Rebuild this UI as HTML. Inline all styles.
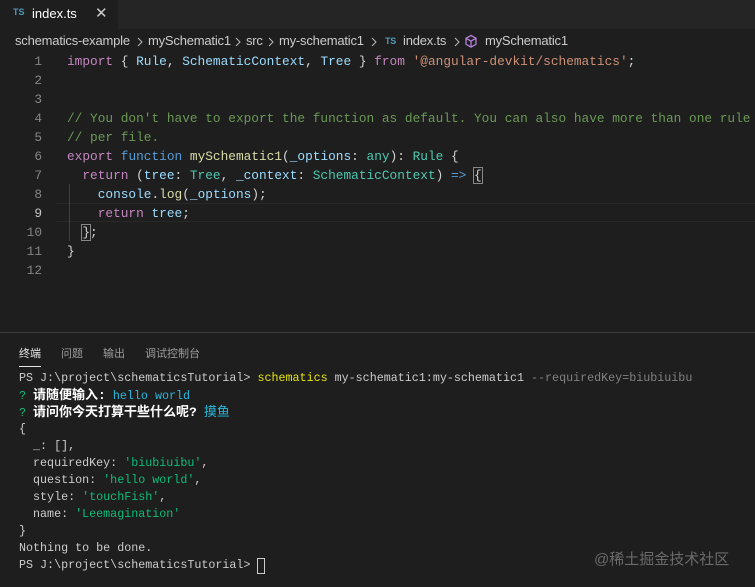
<!DOCTYPE html>
<html><head><meta charset="utf-8">
<style>
*{margin:0;padding:0;box-sizing:border-box}
body{width:755px;height:587px;background:#1e1e1e;overflow:hidden;position:relative;font-family:"Liberation Sans","Noto Sans CJK SC",sans-serif}
.tabbar{position:absolute;left:0;top:0;width:755px;height:29px;background:#252526}
.tab{position:absolute;left:0;top:0;width:118px;height:29px;background:#1e1e1e;color:#fff;font-size:13px}
.bc{position:absolute;top:33px;font-size:13px;color:#cccccc;white-space:pre;letter-spacing:-0.2px}
.sep{position:absolute;top:36px}
.m{font-family:"Liberation Mono","Noto Sans CJK SC",monospace;white-space:pre;position:absolute}
.code .m{font-size:12.8px;line-height:19px}
.ln{color:#858585;width:42px;text-align:right;left:0}
.kw{color:#c586c0}.bl{color:#569cd6}.ty{color:#4ec9b0}.va{color:#9cdcfe}.st{color:#ce9178}.cm{color:#6a9955}.fn{color:#dcdcaa}.tx{color:#d4d4d4}
.panel{position:absolute;left:0;top:332px;width:755px;height:255px;background:#1e1e1e;border-top:1px solid #3c3c3c}
.ptab{position:absolute;top:12px;font-size:11px;color:#9d9d9d}
.t{font-size:11.7px;line-height:17px;color:#cccccc;left:19px}
.g{color:#23d18b}.y{color:#e5e510}.c{color:#29b8db}.d{color:#808080}.w{color:#fff;font-weight:bold;font-size:13px}.gs{color:#0dbc79}
</style></head><body>
<div class="tabbar">
 <div class="tab"><span style="position:absolute;left:13px;top:7px;font-size:9px;color:#519aba;font-weight:bold">TS</span><span style="position:absolute;left:32px;top:6px">index.ts</span><span style="position:absolute;left:95px;top:4px;font-size:15px;color:#ccc">✕</span></div>
</div>
<div class="bc" style="left:15px">schematics-example</div>
<svg class="sep" style="left:136px" width="8" height="12"><path d="M2 2l4 4-4 4" stroke="#bbb" fill="none"/></svg>
<div class="bc" style="left:148px">mySchematic1</div>
<svg class="sep" style="left:234px" width="8" height="12"><path d="M2 2l4 4-4 4" stroke="#bbb" fill="none"/></svg>
<div class="bc" style="left:246px">src</div>
<svg class="sep" style="left:267px" width="8" height="12"><path d="M2 2l4 4-4 4" stroke="#bbb" fill="none"/></svg>
<div class="bc" style="left:279px">my-schematic1</div>
<svg class="sep" style="left:370px" width="8" height="12"><path d="M2 2l4 4-4 4" stroke="#bbb" fill="none"/></svg>
<div class="bc" style="left:385px;top:36px;font-size:9px;color:#519aba;font-weight:bold">TS</div>
<div class="bc" style="left:403px">index.ts</div>
<svg class="sep" style="left:453px" width="8" height="12"><path d="M2 2l4 4-4 4" stroke="#bbb" fill="none"/></svg>
<svg style="position:absolute;left:464px;top:34px" width="14" height="15" viewBox="0 0 14 15"><path d="M7 1.5l5 2.8v6l-5 2.8-5-2.8v-6zM2 4.3l5 2.8 5-2.8M7 7.1v6" stroke="#b180d7" stroke-width="1.3" fill="none"/></svg>
<div class="bc" style="left:485px">mySchematic1</div>
<div style="position:absolute;left:56px;top:203px;width:699px;height:19px;border-top:1px solid #282828;border-bottom:1px solid #282828"></div>
<div style="position:absolute;left:69px;top:184px;width:1px;height:57px;background:#404040"></div>
<div class="code">
<div class="m ln" style="top:52px">1</div><div class="m" style="left:67px;top:52px"><span class="kw">import</span><span class="tx"> { </span><span class="va">Rule</span><span class="tx">, </span><span class="va">SchematicContext</span><span class="tx">, </span><span class="va">Tree</span><span class="tx"> } </span><span class="kw">from</span><span class="tx"> </span><span class="st">'@angular-devkit/schematics'</span><span class="tx">;</span></div>
<div class="m ln" style="top:71px">2</div>
<div class="m ln" style="top:90px">3</div>
<div class="m ln" style="top:109px">4</div><div class="m cm" style="left:67px;top:109px">// You don't have to export the function as default. You can also have more than one rule</div>
<div class="m ln" style="top:128px">5</div><div class="m cm" style="left:67px;top:128px">// per file.</div>
<div class="m ln" style="top:147px">6</div><div class="m" style="left:67px;top:147px"><span class="kw">export</span> <span class="bl">function</span> <span class="fn">mySchematic1</span><span class="tx">(</span><span class="va">_options</span><span class="tx">: </span><span class="ty">any</span><span class="tx">): </span><span class="ty">Rule</span><span class="tx"> {</span></div>
<div class="m ln" style="top:166px">7</div><div class="m" style="left:67px;top:166px"><span class="tx">  </span><span class="kw">return</span><span class="tx"> (</span><span class="va">tree</span><span class="tx">: </span><span class="ty">Tree</span><span class="tx">, </span><span class="va">_context</span><span class="tx">: </span><span class="ty">SchematicContext</span><span class="tx">) </span><span class="bl">=&gt;</span><span class="tx"> <span style="outline:1px solid #888">{</span></span></div>
<div class="m ln" style="top:185px">8</div><div class="m" style="left:67px;top:185px"><span class="tx">    </span><span class="va">console</span><span class="tx">.</span><span class="fn">log</span><span class="tx">(</span><span class="va">_options</span><span class="tx">);</span></div>
<div class="m ln" style="top:204px;color:#c6c6c6">9</div><div class="m" style="left:67px;top:204px"><span class="tx">    </span><span class="kw">return</span><span class="tx"> </span><span class="va">tree</span><span class="tx">;</span></div>
<div class="m ln" style="top:223px">10</div><div class="m" style="left:67px;top:223px"><span class="tx">  <span style="outline:1px solid #888">}</span>;</span></div>
<div class="m ln" style="top:242px">11</div><div class="m tx" style="left:67px;top:242px">}</div>
<div class="m ln" style="top:261px">12</div>
</div>
<div class="panel">
 <div class="ptab" style="left:19px;color:#e7e7e7">终端</div>
 <div style="position:absolute;left:19px;top:33px;width:22px;height:1px;background:#e7e7e7"></div>
 <div class="ptab" style="left:61px">问题</div>
 <div class="ptab" style="left:103px">输出</div>
 <div class="ptab" style="left:145px">调试控制台</div>
</div>
<div class="m t" style="top:370px">PS J:\project\schematicsTutorial&gt; <span class="y">schematics</span> my-schematic1:my-schematic1 <span class="d">--requiredKey=biubiuibu</span></div>
<div class="m t" style="top:387px"><span class="gs">?</span> <span class="w">请随便输入:</span> <span class="c">hello world</span></div>
<div class="m t" style="top:404px"><span class="gs">?</span> <span class="w">请问你今天打算干些什么呢?</span> <span class="c" style="font-size:13px">摸鱼</span></div>
<div class="m t" style="top:421px">{</div>
<div class="m t" style="top:438px">  _: [],</div>
<div class="m t" style="top:455px">  requiredKey: <span class="gs">'biubiuibu'</span>,</div>
<div class="m t" style="top:472px">  question: <span class="gs">'hello world'</span>,</div>
<div class="m t" style="top:489px">  style: <span class="gs">'touchFish'</span>,</div>
<div class="m t" style="top:506px">  name: <span class="gs">'Leemagination'</span></div>
<div class="m t" style="top:523px">}</div>
<div class="m t" style="top:540px">Nothing to be done.</div>
<div class="m t" style="top:557px">PS J:\project\schematicsTutorial&gt; </div>
<div style="position:absolute;left:257px;top:558px;width:8px;height:16px;border:1px solid #ccc"></div>
<div style="position:absolute;left:594px;top:548px;font-size:15px;color:#6a6a6a">@稀土掘金技术社区</div>
</body></html>
